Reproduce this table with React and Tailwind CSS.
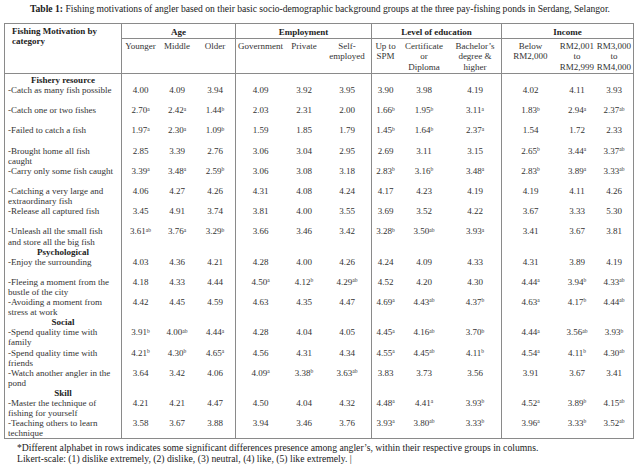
import React from "react";

const COLS =
  "grid grid-cols-[116px_38px_36px_40px_50px_38px_48px_28px_50px_52px_58px_36px_38px]";
const GROUP_START = new Set([1, 4, 7, 10]);

const data = [
  { sec: "Fishery resource" },
  { l: ["-Catch as many fish possible"], v: ["4.00", "4.09", "3.94", "4.09", "3.92", "3.95", "3.90", "3.98", "4.19", "4.02", "4.11", "3.93"] },
  { l: ["-Catch one or two fishes"], v: ["2.70a", "2.42a", "1.44b", "2.03", "2.31", "2.00", "1.66b", "1.95b", "3.11a", "1.83b", "2.94a", "2.37ab"] },
  { l: ["-Failed to catch a fish"], v: ["1.97a", "2.30a", "1.09b", "1.59", "1.85", "1.79", "1.45b", "1.64b", "2.37a", "1.54", "1.72", "2.33"] },
  { l: ["-Brought home all fish", "caught"], v: ["2.85", "3.39", "2.76", "3.06", "3.04", "2.95", "2.69", "3.11", "3.15", "2.65b", "3.44a", "3.37ab"] },
  { l: ["-Carry only some fish caught"], v: ["3.39a", "3.48a", "2.59b", "3.06", "3.08", "3.18", "2.83b", "3.16b", "3.48a", "2.83b", "3.89a", "3.33ab"] },
  { l: ["-Catching a very large and", "extraordinary fish"], v: ["4.06", "4.27", "4.26", "4.31", "4.08", "4.24", "4.17", "4.23", "4.19", "4.19", "4.11", "4.26"] },
  { l: ["-Release all captured fish"], v: ["3.45", "4.91", "3.74", "3.81", "4.00", "3.55", "3.69", "3.52", "4.22", "3.67", "3.33", "5.30"] },
  { l: ["-Unleash all the small fish", "and store all the big fish"], v: ["3.61ab", "3.76a", "3.29b", "3.66", "3.46", "3.42", "3.28b", "3.50ab", "3.93a", "3.41", "3.67", "3.81"] },
  { sec: "Psychological" },
  { l: ["-Enjoy the surrounding"], v: ["4.03", "4.36", "4.21", "4.28", "4.00", "4.26", "4.24", "4.09", "4.33", "4.31", "3.89", "4.19"] },
  { l: ["-Fleeing a moment from the", "bustle of the city"], v: ["4.18", "4.33", "4.44", "4.50a", "4.12b", "4.29ab", "4.52", "4.20", "4.30", "4.44a", "3.94b", "4.33ab"] },
  { l: ["-Avoiding a moment from", "stress at work"], v: ["4.42", "4.45", "4.59", "4.63", "4.35", "4.47", "4.69a", "4.43ab", "4.37b", "4.63a", "4.17b", "4.44ab"] },
  { sec: "Social" },
  { l: ["-Spend quality time with", "family"], v: ["3.91b", "4.00ab", "4.44a", "4.28", "4.04", "4.05", "4.45a", "4.16ab", "3.70b", "4.44a", "3.56ab", "3.93b"] },
  { l: ["-Spend quality time with", "friends"], v: ["4.21b", "4.30b", "4.65a", "4.56", "4.31", "4.34", "4.55a", "4.45ab", "4.11b", "4.54a", "4.11b", "4.30ab"] },
  { l: ["-Watch another angler in the", "pond"], v: ["3.64", "3.42", "4.06", "4.09a", "3.38b", "3.63ab", "3.83", "3.73", "3.56", "3.91", "3.67", "3.41"] },
  { sec: "Skill" },
  { l: ["-Master the technique of", "fishing for yourself"], v: ["4.21", "4.21", "4.47", "4.50", "4.04", "4.32", "4.48a", "4.41a", "3.93b", "4.52a", "3.89b", "4.15ab"] },
  { l: ["-Teaching others to learn", "technique"], v: ["3.58", "3.67", "3.88", "3.94", "3.46", "3.76", "3.93a", "3.80ab", "3.33b", "3.96a", "3.33b", "3.52ab"] },
];

const subHeads = [
  ["Younger"],
  ["Middle"],
  ["Older"],
  ["Government"],
  ["Private"],
  ["Self-", "employed"],
  ["Up to", "SPM"],
  ["Certificate", "or", "Diploma"],
  ["Bachelor\u2019s", "degree &", "higher"],
  ["Below", "RM2,000"],
  ["RM2,001", "to", "RM2,999"],
  ["RM3,000", "to", "RM4,000"],
];

function Val({ s }) {
  const m = s.match(/^([\d.]+)([ab]*)$/);
  return (
    <span className="whitespace-nowrap">
      {m[1]}
      {m[2] && <sup className="text-[5.5px]">{m[2]}</sup>}
    </span>
  );
}

function Lines({ arr }) {
  return arr.map((t, i) => (
    <div key={i} className="whitespace-nowrap">
      {t}
    </div>
  ));
}

export default function App() {
  return (
    <div className="w-[640px] h-[465px] bg-white overflow-hidden font-['Liberation_Serif','Times_New_Roman',serif] text-[#333]">
      <div className="h-[23px] pt-[3px] text-center text-[9.6px] leading-[12px] text-[#1a1a1a] whitespace-nowrap">
        <b>Table 1:</b> Fishing motivations of angler based on their basic socio-demographic background groups at the three pay-fishing ponds in Serdang, Selangor.
      </div>
      <div className={`${COLS} ml-[4px] w-[630px] border border-[#8a8a8a] text-[9px]`}>
        <div className="row-span-2 border-b border-[#8a8a8a] pl-[7px] pt-[3px] leading-[9.5px] font-bold text-[#222]">
          <div>Fishing Motivation by</div>
          <div>category</div>
        </div>
        {["Age", "Employment", "Level of education", "Income"].map((g) => (
          <div
            key={g}
            className="col-span-3 h-[15px] border-l border-b border-[#8a8a8a] text-center font-bold leading-[10px] pt-[3px] text-[#222]"
          >
            {g}
          </div>
        ))}
        {subHeads.map((h, i) => (
          <div
            key={i}
            className={`h-[35px] border-b border-[#8a8a8a] text-center leading-[10.4px] pt-[2px] ${
              GROUP_START.has(i + 1) ? "border-l" : ""
            }`}
          >
            <Lines arr={h} />
          </div>
        ))}
        {data.map((r, ri) => {
          const first = ri === 0;
          if (r.sec) {
            return (
              <React.Fragment key={ri}>
                <div
                  className={`h-[10.1px] leading-[10.1px] text-center font-bold text-[#222] ${first ? "mt-[1px]" : ""}`}
                >
                  {r.sec}
                </div>
                {Array.from({ length: 12 }).map((_, ci) => (
                  <div
                    key={ci}
                    className={`${GROUP_START.has(ci + 1) ? "border-l border-[#8a8a8a]" : ""}`}
                  />
                ))}
              </React.Fragment>
            );
          }
          return (
            <React.Fragment key={ri}>
              <div className="h-[20.2px] leading-[10.1px] pl-[3px]">
                <Lines arr={r.l} />
              </div>
              {r.v.map((v, ci) => (
                <div
                  key={ci}
                  className={`h-[20.2px] leading-[10.1px] text-center ${
                    GROUP_START.has(ci + 1) ? "border-l border-[#8a8a8a]" : ""
                  }`}
                >
                  <Val s={v} />
                </div>
              ))}
            </React.Fragment>
          );
        })}
      </div>
      <div className="pl-[17px] pt-[3px] text-[9.7px] leading-[11px] text-[#222]">
        <div className="whitespace-nowrap">
          *Different alphabet in rows indicates some significant differences presence among angler{"\u2019"}s, within their respective groups in columns.
        </div>
        <div className="whitespace-nowrap">
          Likert-scale: (1) dislike extremely, (2) dislike, (3) neutral, (4) like, (5) like extremely. |
        </div>
      </div>
    </div>
  );
}
